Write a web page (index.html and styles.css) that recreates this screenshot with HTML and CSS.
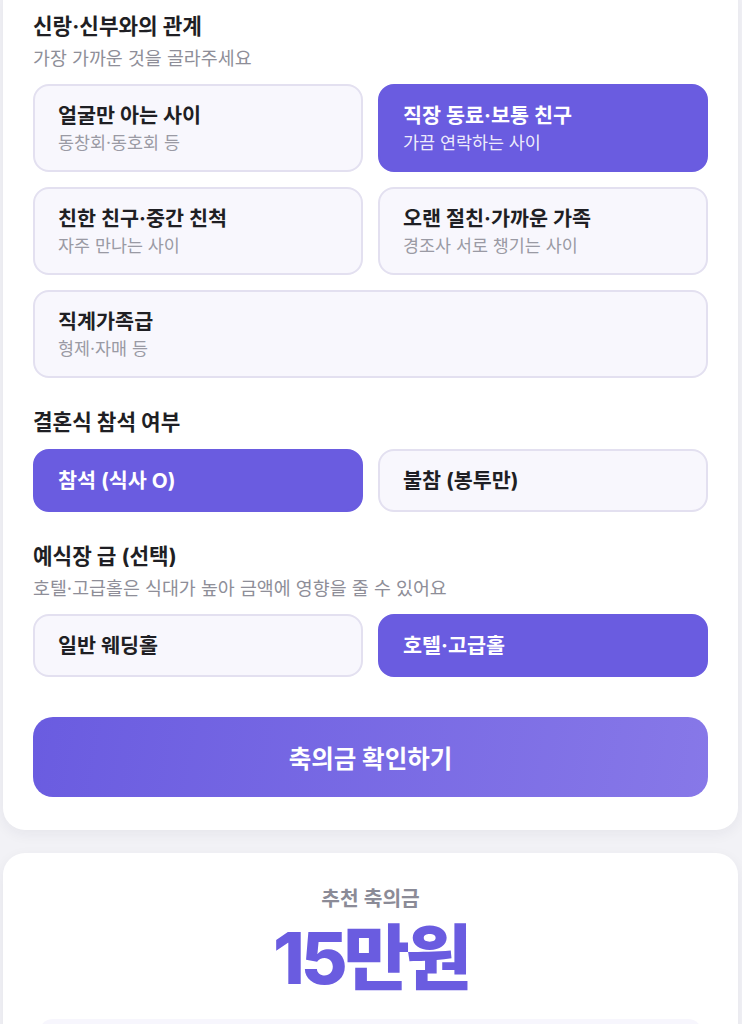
FILE: index.html
```html
<!DOCTYPE html>
<html lang="ko">
<head>
<meta charset="utf-8">
<title>축의금 계산기</title>
<link rel="stylesheet" href="styles.css">
</head>
<body>
<div class="page">
  <div class="card form-card">
    <section class="section first">
      <h2 class="title with-sub">신랑·신부와의 관계</h2>
      <p class="sub">가장 가까운 것을 골라주세요</p>
      <div class="grid">
        <button class="opt"><span class="label">얼굴만 아는 사이</span><span class="desc">동창회·동호회 등</span></button>
        <button class="opt selected"><span class="label">직장 동료·보통 친구</span><span class="desc">가끔 연락하는 사이</span></button>
        <button class="opt"><span class="label">친한 친구·중간 친척</span><span class="desc">자주 만나는 사이</span></button>
        <button class="opt"><span class="label">오랜 절친·가까운 가족</span><span class="desc">경조사 서로 챙기는 사이</span></button>
        <button class="opt wide"><span class="label">직계가족급</span><span class="desc">형제·자매 등</span></button>
      </div>
    </section>

    <section class="section">
      <h2 class="title">결혼식 참석 여부</h2>
      <div class="grid">
        <button class="opt single selected"><span class="label">참석 (식사 O)</span></button>
        <button class="opt single"><span class="label">불참 (봉투만)</span></button>
      </div>
    </section>

    <section class="section">
      <h2 class="title with-sub">예식장 급 (선택)</h2>
      <p class="sub">호텔·고급홀은 식대가 높아 금액에 영향을 줄 수 있어요</p>
      <div class="grid">
        <button class="opt single"><span class="label">일반 웨딩홀</span></button>
        <button class="opt single selected"><span class="label">호텔·고급홀</span></button>
      </div>
    </section>

    <button class="cta">축의금 확인하기</button>
  </div>

  <div class="card result-card">
    <p class="result-label">추천 축의금</p>
    <p class="result-amount">15만원</p>
    <div class="result-box"></div>
  </div>
</div>
</body>
</html>
```

FILE: styles.css
```css
* { box-sizing: border-box; }
html, body {
  margin: 0;
  padding: 0;
  background: #f2f2f6;
  font-family: Inter, "Noto Sans CJK KR", sans-serif;
  color: #1f1f24;
}
.page {
  padding: 0 4px 40px 3px;
}
.card {
  background: #ffffff;
  border-radius: 22px;
  box-shadow: 0 4px 14px rgba(30, 30, 60, 0.06);
}
.form-card {
  margin-top: -22px;
  padding: 34px 30px 33px;
}
.section + .section { margin-top: 30px; }
.title {
  margin: 0 0 13px;
  font-size: 21.3px;
  line-height: 28px;
  font-weight: 700;
  color: #1f1f24;
}
.title.with-sub { margin-bottom: 0; }
.sub {
  margin: 6px 0 14px;
  font-size: 18.4px;
  line-height: 24px;
  color: #8e8e98;
}
.grid {
  display: grid;
  grid-template-columns: 1fr 1fr;
  gap: 15px;
}
.opt {
  display: flex;
  flex-direction: column;
  align-items: flex-start;
  gap: 3px;
  height: 88px;
  padding: 0 23px;
  justify-content: center;
  border: 2px solid #e3e0f0;
  background: #f8f7fd;
  border-radius: 16px;
  font-family: inherit;
  text-align: left;
  cursor: pointer;
}
.opt.wide { grid-column: span 2; }
.opt.single { height: 63px; }
.label {
  font-size: 20.7px;
  line-height: 27px;
  font-weight: 700;
  color: #1f1f24;
}
.desc {
  font-size: 17.4px;
  line-height: 22px;
  color: #9a9aa4;
}
.opt.selected {
  background: #6a5ce0;
  border-color: #6a5ce0;
}
.opt.selected .label { color: #ffffff; }
.opt.selected .desc { color: rgba(255, 255, 255, 0.9); }
.cta {
  display: block;
  width: 100%;
  height: 80px;
  margin-top: 40px;
  border: none;
  border-radius: 20px;
  background: linear-gradient(100deg, #6a5ce0 0%, #8778e8 100%);
  color: #ffffff;
  font-family: inherit;
  font-size: 24.5px;
  font-weight: 700;
  cursor: pointer;
}
.result-card {
  margin-top: 23px;
  padding: 34px 36px 20px;
  text-align: center;
}
.result-label {
  margin: 0;
  font-size: 20.3px;
  line-height: 24px;
  font-weight: 600;
  color: #8b8b97;
}
.result-amount {
  margin: 6px 0 0;
  font-size: 72px;
  line-height: 82px;
  font-weight: 800;
  color: #6a5ce0;
  letter-spacing: -4px;
}
.result-box {
  margin-top: 20px;
  height: 90px;
  background: #f7f6fd;
  border-radius: 14px;
}
```
